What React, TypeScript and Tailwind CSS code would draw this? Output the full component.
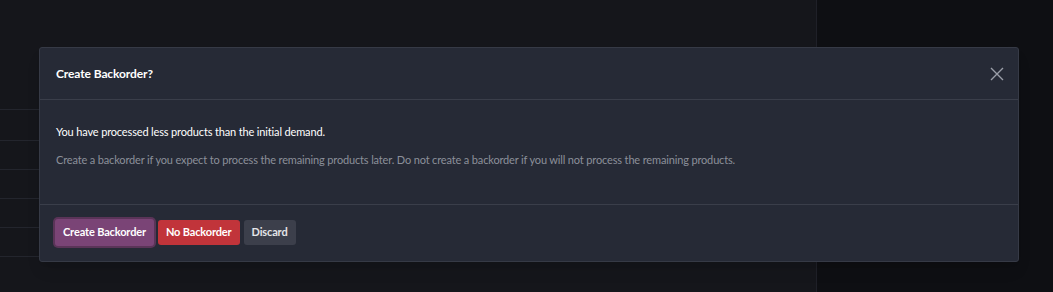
import React from 'react';

const rows = [110, 141, 169, 198, 227, 256];

const App: React.FC = () => {
    return (
        <div
            className="relative w-[1053px] h-[292px] overflow-hidden bg-[#15161b] flex"
            style={{ fontFamily: 'Lato, "Noto Sans", sans-serif' }}
        >
            {/* page behind the dialog */}
            <div className="w-[817px] h-full border-r border-[#1f2028] flex flex-col pt-[109px]">
                {rows.map((r, i) => (
                    <div key={r} className={`border-t border-[#23252d] ${i === 0 ? 'h-[31px]' : 'h-[29px]'}`} />
                ))}
            </div>
            <div className="flex-1 h-full bg-[#0e0f13]" />

            {/* dialog */}
            <div className="absolute left-[39px] top-[47px] w-[980px] bg-[#262a36] border border-[#363a46] rounded-[3px] shadow-lg">
                <div className="h-[52px] flex items-center justify-between pl-[16px] pr-[14px] border-b border-[#3a3e4a]">
                    <h4 className="text-[12px] font-bold text-white tracking-[-0.1px]">Create Backorder?</h4>
                    <button className="text-[#9a9ea8]">
                        <svg width="14" height="14" viewBox="0 0 14 14" fill="none" stroke="currentColor" strokeWidth={1.4}>
                            <path d="M1 1L13 13M13 1L1 13" />
                        </svg>
                    </button>
                </div>
                <div className="px-[16px] pt-[23px] pb-[35px] text-[11px] tracking-[-0.15px]">
                    <p className="text-white leading-[18px]">You have processed less products than the initial demand.</p>
                    <p className="mt-[10px] text-[#8c909a] leading-[18px]">
                        Create a backorder if you expect to process the remaining products later. Do not create a backorder if you will not process the remaining products.
                    </p>
                </div>
                <div className="border-t border-[#3a3e4a] px-[15px] pt-[14px] pb-[15px] flex items-center gap-[3px] tracking-[-0.15px]">
                    <button className="h-[27px] px-[8px] rounded-[3px] bg-[#7a4476] text-white text-[11px] font-bold ring-2 ring-[#5a3458]">
                        Create Backorder
                    </button>
                    <button className="h-[25px] px-[8px] ml-[1px] rounded-[3px] bg-[#c1343a] text-white text-[11px] font-bold">
                        No Backorder
                    </button>
                    <button className="h-[25px] px-[8px] ml-[1px] rounded-[3px] bg-[#3c3f4b] text-[#e4e5e8] text-[11px] font-bold">
                        Discard
                    </button>
                </div>
            </div>
        </div>
    );
};

export default App;
